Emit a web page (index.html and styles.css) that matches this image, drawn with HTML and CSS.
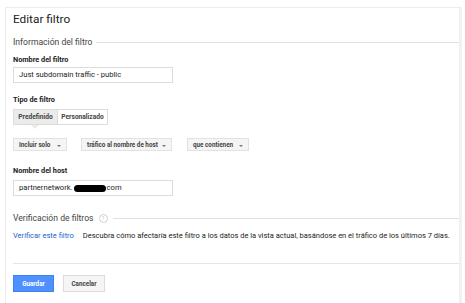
FILE: index.html
```html
<!DOCTYPE html>
<html lang="es">
<head>
<meta charset="utf-8">
<title>Editar filtro</title>
<link rel="stylesheet" href="styles.css">
</head>
<body>
<div class="panel">
  <h1 class="title">Editar filtro</h1>
  <div class="section-head"><span>Información del filtro</span><span class="rule"></span></div>

  <div class="label">Nombre del filtro</div>
  <div class="input">Just subdomain traffic - public</div>

  <div class="label label-type">Tipo de filtro</div>
  <div class="segmented">
    <span class="seg seg-active">Predefinido</span>
    <span class="seg">Personalizado</span>
  </div>

  <div class="dropdowns">
    <span class="dd dd1">Incluir solo <i class="caret"></i></span>
    <span class="dd dd2">tráfico al nombre de host <i class="caret"></i></span>
    <span class="dd dd3">que contienen <i class="caret"></i></span>
  </div>

  <div class="label label-host">Nombre del host</div>
  <div class="input">partnernetwork.<span class="redact"></span>com</div>

  <div class="section-head section-verify"><span>Verificación de filtros</span><span class="help">?</span><span class="rule"></span></div>
  <div class="verify-row"><a class="link" href="#">Verificar este filtro</a><span class="desc">Descubra cómo afectaría este filtro a los datos de la vista actual, basándose en el tráfico de los últimos 7 días.</span></div>

  <div class="divider"></div>
  <div class="actions">
    <span class="btn btn-primary">Guardar</span>
    <span class="btn btn-secondary">Cancelar</span>
  </div>
</div>
</body>
</html>
```
FILE: styles.css
```css
html, body {
  margin: 0;
  padding: 0;
  background: #ffffff;
}
body {
  font-family: Roboto, "Liberation Sans", Arial, sans-serif;
  color: #222;
  height: 303px;
  overflow: hidden;
}
.panel {
  margin: 7px 3px 0 5px;
  border-top: 1px solid #ececec;
  border-left: 1px solid #ececec;
  border-right: 3px solid #f1f1f1;
  padding-left: 7px;
  height: 300px;
  box-sizing: border-box;
}
.title {
  margin: 0;
  height: 22px;
  line-height: 22px;
  font-size: 11.8px;
  font-weight: 400;
  color: #222;
}
.section-head {
  display: flex;
  align-items: center;
  margin-top: 6px;
  height: 12px;
  font-size: 8.6px;
  color: #444;
}
.section-head .rule {
  flex: 1;
  height: 1px;
  background: #e0e0e0;
  margin-left: 4px;
}
.label {
  margin-top: 6px;
  height: 12px;
  line-height: 12px;
  font-size: 7.3px;
  font-weight: 700;
  color: #222;
}
.input {
  margin-top: 1px;
  width: 160px;
  height: 16px;
  box-sizing: border-box;
  border: 1px solid #dcdcdc;
  padding-left: 5px;
  font-size: 7.6px;
  line-height: 14px;
  color: #222;
  display: flex;
  align-items: center;
}
.redact {
  display: inline-block;
  width: 32px;
  height: 7px;
  background: #000;
  border-radius: 4px;
  margin: 0 1px;
}
.label-type { margin-top: 11px; }
.segmented {
  margin-top: 3px;
  display: flex;
  height: 16px;
  width: 95px;
  border: 1px solid #dcdcdc;
  box-sizing: border-box;
  position: relative;
}
.seg {
  display: flex;
  align-items: center;
  justify-content: center;
  font-size: 6.6px;
  font-weight: 700;
  color: #444;
  padding: 0 2px;
}
.seg-active {
  background: #ebebeb;
  width: 43px;
  box-sizing: border-box;
  position: relative;
}
.seg + .seg {
  border-left: 1px solid #dcdcdc;
  flex: 1;
}
.seg-active::after {
  content: "";
  position: absolute;
  left: 17px;
  top: 15px;
  border-left: 4px solid transparent;
  border-right: 4px solid transparent;
  border-top: 4px solid #ebebeb;
}
.dropdowns {
  margin-top: 13px;
  display: flex;
  height: 13px;
}
.dd {
  display: flex;
  align-items: center;
  box-sizing: border-box;
  height: 13px;
  background: #f5f5f5;
  border: 1px solid #e2e2e2;
  font-size: 6.3px;
  font-weight: 700;
  color: #444;
  padding-left: 5px;
  position: relative;
}
.dd1 { width: 54px; }
.dd2 { width: 91px; margin-left: 14px; }
.dd3 { width: 62px; margin-left: 15px; }
.caret {
  position: absolute;
  right: 5px;
  top: 6px;
  border-left: 2px solid transparent;
  border-right: 2px solid transparent;
  border-top: 2px solid #777;
}
.label-host { margin-top: 14px; }
.label-host + .input { margin-top: 3px; }
.section-verify { margin-top: 16px; }
.help {
  display: inline-flex;
  align-items: center;
  justify-content: center;
  width: 7px;
  height: 7px;
  border: 1px solid #d0d0d0;
  border-radius: 50%;
  font-size: 5px;
  color: #bbb;
  margin-left: 5px;
}
.section-verify .rule { margin-left: 5px; }
.verify-row {
  margin-top: 6px;
  height: 12px;
  line-height: 12px;
  font-size: 7.5px;
  display: flex;
  white-space: nowrap;
}
.link {
  color: #1a5fc8;
  text-decoration: none;
}
.desc {
  margin-left: 9px;
  color: #222;
}
.divider {
  margin-top: 21px;
  height: 1px;
  background: #e5e5e5;
}
.actions {
  margin-top: 11px;
  display: flex;
  gap: 9px;
}
.btn {
  display: flex;
  align-items: center;
  justify-content: center;
  height: 17px;
  box-sizing: border-box;
  font-size: 6.3px;
  font-weight: 700;
}
.btn-primary {
  width: 41px;
  background: #4d90fe;
  border: 1px solid #3f83f3;
  color: #fff;
}
.btn-secondary {
  width: 42px;
  background: #f5f5f5;
  border: 1px solid #dcdcdc;
  color: #444;
}
```
